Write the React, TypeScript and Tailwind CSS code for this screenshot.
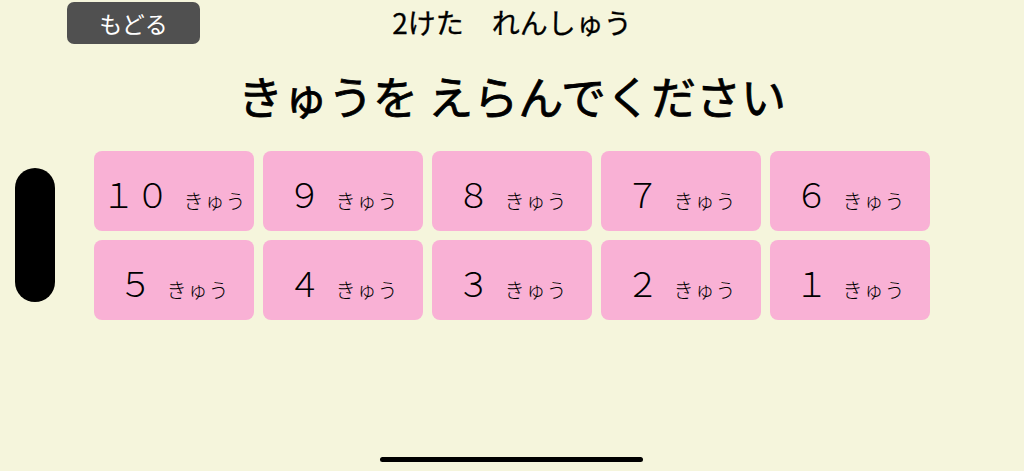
import React from "react"

const levels = ["１０", "９", "８", "７", "６", "５", "４", "３", "２", "１"]

export default function App() {
  return (
    <div
      className="relative h-[471px] w-full overflow-hidden bg-[#f5f5dc] text-black"
      style={{ fontFamily: '"Noto Sans CJK JP", "Noto Sans", sans-serif' }}
    >
      {/* Header */}
      <div className="grid h-[46px] grid-cols-[1fr_auto_1fr] items-start pt-[2px]">
        <div className="pl-[67px]">
          <button className="flex h-[42px] w-[133px] items-center justify-center rounded-[7px] bg-[#505050] text-[23px] text-white">
            もどる
          </button>
        </div>
        <div className="pt-[2px] text-[28px] leading-[36px] [-webkit-text-stroke:0.3px_black]">
          2けた　れんしゅう
        </div>
        <div />
      </div>

      {/* Title */}
      <h1 className="mt-[24px] text-center text-[45px] font-normal leading-[52px] [-webkit-text-stroke:0.8px_black]">
        きゅうを えらんでください
      </h1>

      {/* Level grid */}
      <div className="mt-[29px] flex justify-center">
        <div className="grid grid-cols-[repeat(5,160px)] gap-[9px]">
          {levels.map((lv) => (
            <button
              key={lv}
              className="flex h-[80px] items-center justify-center rounded-[8px] bg-[#f9b1d5]"
            >
              <span className="mt-[6px] text-[34px] font-light leading-none">{lv}</span>
              <span className="ml-[14px] mt-[20px] text-[20px] font-light leading-none tracking-[1px]">
                きゅう
              </span>
            </button>
          ))}
        </div>
      </div>

      {/* Device overlays */}
      <div className="absolute left-[15px] top-[168px] h-[134px] w-[40px] rounded-full bg-black" />
      <div className="absolute bottom-[9px] left-[380px] h-[5px] w-[263px] rounded-full bg-black" />
    </div>
  )
}
